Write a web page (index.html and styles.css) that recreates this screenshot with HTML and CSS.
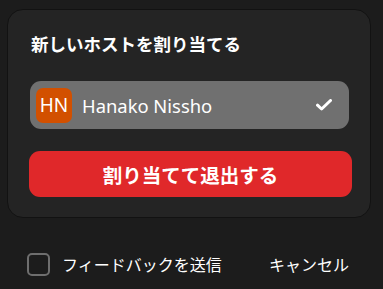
FILE: index.html
```html
<!DOCTYPE html>
<html lang="ja">
<head>
<meta charset="utf-8">
<link rel="stylesheet" href="styles.css">
</head>
<body>
<div class="card">
  <h1 class="title">新しいホストを割り当てる</h1>
  <div class="row">
    <div class="avatar">HN</div>
    <div class="name">Hanako Nissho</div>
    <svg class="check" width="16" height="12" viewBox="0 0 16 12"><path d="M1.5 6.2 L5.6 10 L14.5 1.5" fill="none" stroke="#fff" stroke-width="3" stroke-linecap="round" stroke-linejoin="round"/></svg>
  </div>
  <button class="primary">割り当てて退出する</button>
</div>
<div class="footer">
  <label class="feedback"><span class="box"></span><span class="label">フィードバックを送信</span></label>
  <span class="cancel">キャンセル</span>
</div>
</body>
</html>
```
FILE: styles.css
```css
html, body {
  margin: 0;
  padding: 0;
  background: #1c1c1c;
  width: 383px;
  height: 289px;
  overflow: hidden;
  font-family: "Noto Sans", "Noto Sans CJK JP", sans-serif;
  color: #fff;
}
.card {
  box-sizing: border-box;
  margin: 9px 0 0 7px;
  width: 364px;
  height: 209px;
  background: #242424;
  border: 1px solid #121212;
  border-radius: 16px;
  padding: 21px 19px 0 20px;
  display: flex;
  flex-direction: column;
}
.title {
  margin: 0 0 0 3px;
  font-size: 17.5px;
  line-height: 26px;
  font-weight: 700;
  font-family: "Noto Sans CJK JP", sans-serif;
}
.row {
  margin: 24px 2px 0 2px;
  height: 48px;
  background: #707070;
  border-radius: 11px;
  display: flex;
  align-items: center;
  padding: 0 17px 0 6px;
}
.avatar {
  width: 36px;
  height: 35px;
  border-radius: 7px;
  background: #d25000;
  display: flex;
  align-items: center;
  justify-content: center;
  font-size: 19px;
}
.name {
  margin-left: 10px;
  font-size: 18.4px;
  flex: 1;
}
.check { display: block; }
.primary {
  margin-top: 22px;
  height: 46px;
  border: 0;
  border-radius: 11px;
  background: #e0282a;
  color: #fff;
  font-family: "Noto Sans CJK JP", sans-serif;
  font-weight: 700;
  font-size: 19.5px;
  padding: 0;
  width: 323px;
  margin-left: 1px;
}
.footer {
  display: flex;
  align-items: center;
  justify-content: space-between;
  margin: 34px 34px 0 27px;
  font-family: "Noto Sans CJK JP", sans-serif;
  font-size: 16px;
}
.feedback {
  display: flex;
  align-items: center;
}
.box {
  box-sizing: border-box;
  width: 23px;
  height: 23px;
  border: 2px solid #6e6e6e;
  border-radius: 5px;
  margin-right: 12px;
}
```
